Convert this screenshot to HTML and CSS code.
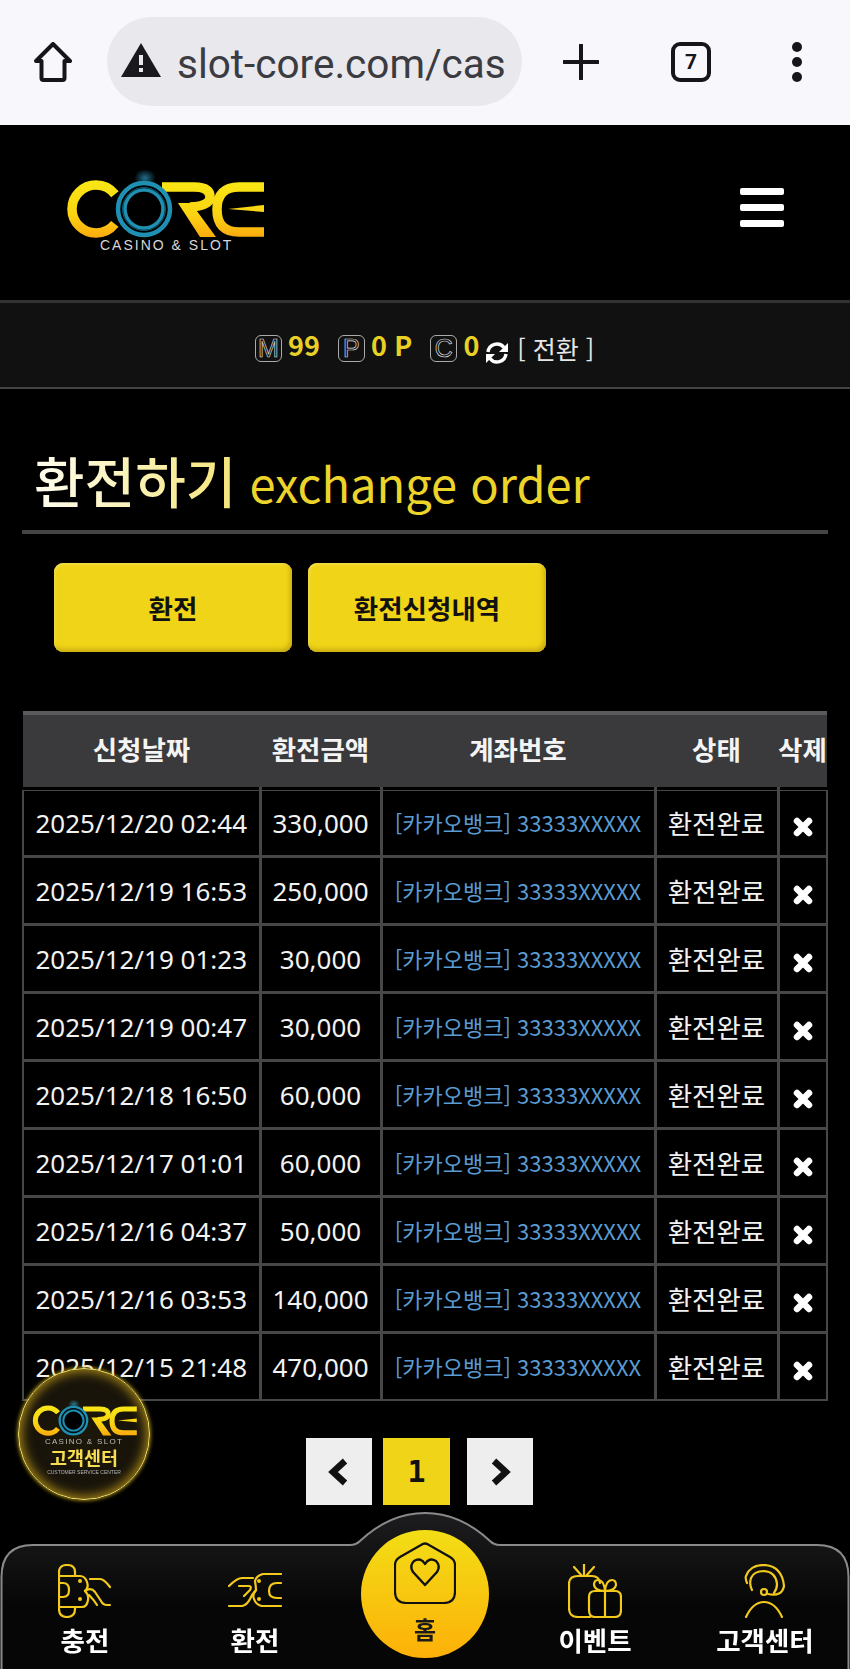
FILE: index.html
```html
<!DOCTYPE html>
<html lang="ko">
<head>
    <meta charset="UTF-8">
    <meta name="viewport" content="width=device-width, initial-scale=1.0">
    <title>환전하기</title>
    <link rel="stylesheet" href="styles.css">
</head>
<body>
    <svg class="defs" width="0" height="0" aria-hidden="true">
        <defs>
            <linearGradient id="logo-grad" gradientUnits="userSpaceOnUse" x1="0" y1="30" x2="0" y2="88">
                <stop offset="0" stop-color="#f8e715"/>
                <stop offset="0.6" stop-color="#fbd312"/>
                <stop offset="1" stop-color="#fca90e"/>
            </linearGradient>
            <radialGradient id="logo-glow">
                <stop offset="0" stop-color="#2f9cc4" stop-opacity="0.7"/>
                <stop offset="1" stop-color="#2f9cc4" stop-opacity="0"/>
            </radialGradient>
            <symbol id="core-logo" viewBox="20 20 210 70">
                <title>CORE</title>
                <ellipse cx="105" cy="28" rx="11" ry="9" fill="url(#logo-glow)"/>
                <circle cx="56" cy="59" r="24" fill="none" stroke="url(#logo-grad)" stroke-width="9.500" stroke-dasharray="118 33" stroke-dashoffset="-16"/>
                <path d="M122 37H154Q170 37 170 47Q170 56 150 57" fill="none" stroke="url(#logo-grad)" stroke-width="9.500"/>
                <path d="M138 53H151L176 87H160Z" fill="url(#logo-grad)"/>
                <path d="M224 37H199Q177 37 177 59.500Q177 82 199 82H224" fill="none" stroke="url(#logo-grad)" stroke-width="9.500"/>
                <path d="M188 59L224 55V62Z" fill="url(#logo-grad)"/>
                <circle cx="104" cy="59" r="27" fill="#000"/>
                <circle cx="104" cy="59" r="26" fill="none" stroke="#1f8fb2" stroke-width="4.500"/>
                <circle cx="104" cy="59" r="21.500" fill="none" stroke="#0b5f7c" stroke-width="1"/>
                <circle cx="104" cy="59" r="19" fill="none" stroke="#1f8fb2" stroke-width="3.500"/>
            </symbol>
        </defs>
    </svg>

    <div class="browser-bar">
        <svg class="ico-home" viewBox="0 0 40 40"><path d="M20 2L37 19H31.500V36Q31.500 38 29.500 38H10.500Q8.500 38 8.500 36V19H3Z" fill="none" stroke="#16161a" stroke-width="4" stroke-linejoin="round"/></svg>
        <div class="url-pill">
            <svg class="ico-warn" viewBox="0 0 40 36"><path d="M20 1L40 35H0Z" fill="#1a1a1e"/><rect x="18" y="13" width="4" height="10" fill="#e9e8ed"/><rect x="18" y="26" width="4" height="4" fill="#e9e8ed"/></svg>
            <span class="url-text">slot-core.com/cas</span>
        </div>
        <svg class="ico-plus" viewBox="0 0 36 36"><path d="M18 1V35M1 18H35" stroke="#16161a" stroke-width="4" stroke-linecap="round"/></svg>
        <div class="tab-count">7</div>
        <div class="dots"><i></i><i></i><i></i></div>
    </div>

    <header class="site-head">
        <svg class="logo"><use href="#core-logo"/></svg>
        <span class="logo-sub">CASINO &amp; SLOT</span>
        <div class="burger"><i></i><i></i><i></i></div>
    </header>

    <div class="points">
        <span class="pt-box">M</span><b class="pt-val">99</b>
        <span class="pt-box pt-gap">P</span><b class="pt-val">0 P</b>
        <span class="pt-box pt-gap">C</span><b class="pt-val">0</b>
        <svg class="ico-sync" viewBox="0 0 24 24"><path d="M3 11A9 9 0 0 1 19 6.500" fill="none" stroke="#fff" stroke-width="3.400"/><path d="M23 2V11H14Z" fill="#fff"/><path d="M21 13A9 9 0 0 1 5 17.500" fill="none" stroke="#fff" stroke-width="3.400"/><path d="M1 22V13H10Z" fill="#fff"/></svg>
        <span class="pt-swap">[ 전환 ]</span>
    </div>

    <main class="content">
        <h1 class="page-title"><span class="ko">환전하기</span> <span class="en">exchange order</span></h1>
        <div class="tabs">
            <a class="tab-btn">환전</a>
            <a class="tab-btn">환전신청내역</a>
        </div>
        <table class="list">
            <thead>
                <tr><th>신청날짜</th><th>환전금액</th><th>계좌번호</th><th>상태</th><th>삭제</th></tr>
            </thead>
            <tbody id="rows"></tbody>
        </table>
        <div class="pager">
            <a class="pg"><svg viewBox="0 0 22 28"><path d="M17 3L5 14L17 25" fill="none" stroke="#111" stroke-width="6.500"/></svg></a>
            <a class="pg pg-on">1</a>
            <a class="pg"><svg viewBox="0 0 22 28"><path d="M5 3L17 14L5 25" fill="none" stroke="#111" stroke-width="6.500"/></svg></a>
        </div>
    </main>

    <div class="cs-badge">
        <svg class="cs-logo"><use href="#core-logo"/></svg>
        <span class="cs-sub">CASINO &amp; SLOT</span>
        <span class="cs-ko">고객센터</span>
        <span class="cs-en">CUSTOMER SERVICE CENTER</span>
    </div>

    <nav class="bottom-nav">
        <svg class="nav-shape" viewBox="0 0 850 157" preserveAspectRatio="none">
            <defs>
                <linearGradient id="nav-bg" x1="0" y1="0" x2="0" y2="1">
                    <stop offset="0" stop-color="#1d1d1f"/>
                    <stop offset="0.6" stop-color="#060606"/>
                </linearGradient>
            </defs>
            <path d="M1.500 157V65Q1.500 33 33 33H350Q356 33 360 29Q390 1 425 1Q460 1 490 29Q494 33 500 33H817Q848.500 33 848.500 65V157" fill="url(#nav-bg)" stroke="#8a8a8a" stroke-width="2"/>
        </svg>
        <a class="nav-item">
            <svg class="nav-ico" viewBox="0 0 54 54"><g fill="none" stroke="#f3c91c" stroke-width="2.200" stroke-linecap="round" stroke-linejoin="round"><path d="M1 12V8Q1 1 9 1Q17 1 17 8V12M1 43V45Q1 53 9 53Q17 53 17 45V43"/><path d="M1 12V43M1 12H22Q27 12 29 18Q31 24 27 27Q31 31 30 36Q29 43 24 43H1"/><path d="M1 19H5Q11 19 11 26Q11 33 5 33H1"/><path d="M32 15H42Q46 15 52 23M27 27Q33 23 37 28L43 37Q45 41 49 41H52M31 31Q36 36 39 41"/></g><g fill="#f3c91c"><circle cx="22" cy="17" r="2"/><circle cx="22" cy="35" r="2"/></g></svg>
            <span>충전</span>
        </a>
        <a class="nav-item">
            <svg class="nav-ico nav-ico-wide" viewBox="0 0 54 34"><g fill="none" stroke="#f3c91c" stroke-width="2.200" stroke-linecap="round" stroke-linejoin="round"><path d="M53 1H35Q28 3 27 8Q28 14 28 17Q24 22 26 26Q28 32 34 33H53"/><path d="M53 10H49Q41 10 41 18Q41 25 49 25H53"/><path d="M1 13Q9 5 14 5H25M11 13H21Q24 13 22 17L16 23M1 33H14Q19 32 22 26Q24 21 28 17"/></g><g fill="#f3c91c"><circle cx="31" cy="8" r="2"/><circle cx="31" cy="26" r="2"/></g></svg>
            <span>환전</span>
        </a>
        <a class="nav-item nav-home">
            <svg class="home-ico" viewBox="0 0 62 62"><path d="M27 3Q31 0 35 3L56 15Q61 18 61 23V50Q61 61 50 61H12Q1 61 1 50V23Q1 18 6 15Z" fill="none" stroke="#111" stroke-width="2.200" stroke-linejoin="round"/><path d="M31 43L19 30Q15 24 20 19Q27 15 31 22Q35 15 42 19Q47 24 43 30Z" fill="none" stroke="#111" stroke-width="2.400" stroke-linejoin="round"/></svg>
            <span>홈</span>
        </a>
        <a class="nav-item">
            <svg class="nav-ico" viewBox="0 0 54 54"><g fill="none" stroke="#f3c91c" stroke-width="2.200" stroke-linecap="round" stroke-linejoin="round"><path d="M22 53H10Q1 53 1 44V20Q1 12 10 12H24Q31 12 32 19"/><path d="M6 3L14 12M16 0V11M26 3L18 12"/><path d="M21 33Q21 27 27 27H47Q53 27 53 33V46Q53 53 47 53H27Q21 53 21 46ZM37 27V53"/><path d="M37 27Q27 27 26 21Q26 16 30 16Q36 16 37 27Q38 16 44 16Q48 16 48 21Q47 27 37 27Z"/></g></svg>
            <span>이벤트</span>
        </a>
        <a class="nav-item">
            <svg class="nav-ico nav-ico-cs" viewBox="0 0 42 54"><g fill="none" stroke="#f3c91c" stroke-width="2.200" stroke-linecap="round" stroke-linejoin="round"><path d="M3 19Q1 14 2 12Q6 1 20 1Q38 2 40 22Q38 33 24 30"/><path d="M8 26Q5 20 7 14Q10 7 20 7Q32 8 33 20Q33 25 30 29"/><circle cx="20" cy="28" r="3"/><path d="M2 53Q9 38 20 38Q31 38 38 53"/></g></svg>
            <span>고객센터</span>
        </a>
    </nav>

    <script>
        const rows = [
            ['2025/12/20 02:44', '330,000'],
            ['2025/12/19 16:53', '250,000'],
            ['2025/12/19 01:23', '30,000'],
            ['2025/12/19 00:47', '30,000'],
            ['2025/12/18 16:50', '60,000'],
            ['2025/12/17 01:01', '60,000'],
            ['2025/12/16 04:37', '50,000'],
            ['2025/12/16 03:53', '140,000'],
            ['2025/12/15 21:48', '470,000']
        ];
        const tbody = document.getElementById('rows');
        rows.forEach(r => {
            const tr = document.createElement('tr');
            tr.innerHTML = `
                <td class="num">${r[0]}</td>
                <td class="num">${r[1]}</td>
                <td class="acct">[카카오뱅크] 33333XXXXX</td>
                <td>환전완료</td>
                <td class="del"><svg viewBox="0 0 20 20"><path d="M4 4L16 16M16 4L4 16" stroke="#fff" stroke-width="6.500" stroke-linecap="round"/></svg></td>
            `;
            tbody.appendChild(tr);
        });
    </script>
</body>
</html>
```

FILE: styles.css
```css
* {
    box-sizing: border-box;
}
html, body {
    margin: 0;
    padding: 0;
    background: #000;
    height: 1669px;
    overflow: hidden;
}
body {
    font-family: "Noto Sans CJK KR", "Noto Sans", sans-serif;
    color: #fff;
}
.defs {
    display: block;
    height: 0;
}

/* browser bar */
.browser-bar {
    height: 125px;
    background: #f8f7fc;
    display: flex;
    align-items: center;
    padding: 0 0 2px 33px;
}
.ico-home {
    width: 40px;
    height: 40px;
}
.url-pill {
    width: 415px;
    height: 89px;
    margin-left: 34px;
    padding-left: 14px;
    background: #e9e8ed;
    border-radius: 45px;
    display: flex;
    align-items: center;
    overflow: hidden;
}
.ico-warn {
    width: 40px;
    height: 36px;
    flex: none;
    margin-top: -3px;
}
.url-text {
    margin-left: 16px;
    font-family: Roboto, sans-serif;
    font-size: 40.500px;
    color: #3b3b42;
    white-space: nowrap;
    padding-top: 4px;
}
.ico-plus {
    width: 36px;
    height: 36px;
    margin-left: 41px;
}
.tab-count {
    width: 40px;
    height: 40px;
    margin-left: 72px;
    border: 4px solid #16161a;
    border-radius: 9px;
    font-family: Roboto, sans-serif;
    font-weight: 700;
    font-size: 21px;
    line-height: 32px;
    color: #16161a;
    text-align: center;
}
.dots {
    margin-left: 81px;
    display: flex;
    flex-direction: column;
    gap: 5px;
}
.dots i {
    display: block;
    width: 10px;
    height: 10px;
    border-radius: 50%;
    background: #16161a;
}

/* header */
.site-head {
    height: 175px;
    background: #000;
    position: relative;
    padding: 45px 66px 0 67px;
    display: flex;
    justify-content: space-between;
}
.logo {
    width: 210px;
    height: 70px;
    margin-left: -7px;
}
.logo-sub {
    position: absolute;
    left: 100px;
    top: 112px;
    font-family: "Liberation Sans", sans-serif;
    font-size: 14px;
    letter-spacing: 2px;
    color: #d8d8d8;
}
.burger {
    display: flex;
    flex-direction: column;
    gap: 9px;
    margin-top: 18px;
}
.burger i {
    display: block;
    width: 44px;
    height: 7px;
    border-radius: 2px;
    background: #fff;
}

/* points */
.points {
    height: 89px;
    background: #111112;
    border-top: 3px solid #333;
    border-bottom: 2px solid #444;
    display: flex;
    align-items: center;
    padding: 6px 0 0 255px;
}
.pt-box {
    width: 27px;
    height: 27px;
    border: 1.500px solid #aaa;
    border-radius: 6px;
    font-family: "Liberation Sans", sans-serif;
    font-size: 25px;
    line-height: 24px;
    color: transparent;
    -webkit-text-stroke: 0.700px #ddd;
    text-align: center;
}
.pt-gap {
    margin-left: 18px;
}
.pt-val {
    margin-left: 6px;
    font-size: 27px;
    line-height: 27px;
    color: #e8d124;
    margin-top: -8px;
}
.ico-sync {
    width: 24px;
    height: 24px;
    margin-left: 6px;
    margin-top: 9px;
}
.pt-swap {
    margin-left: 8px;
    font-size: 25px;
    color: #e6e6e6;
    line-height: 27px;
    white-space: nowrap;
}

/* content */
.content {
    padding: 0 22px;
}
.page-title {
    margin: 0;
    height: 145px;
    padding: 54px 0 0 12px;
    border-bottom: 4px solid #444;
    font-weight: 400;
    line-height: 72px;
    white-space: nowrap;
}
.page-title .ko {
    font-size: 55px;
    font-weight: 500;
    background: linear-gradient(to right, #fffdf0, #f6e578);
    -webkit-background-clip: text;
    background-clip: text;
    color: transparent;
}
.page-title .en {
    margin-left: 4px;
    font-size: 47px;
    color: #ecd42a;
}
.tabs {
    display: flex;
    gap: 16px;
    padding: 29px 32px 0;
}
.tab-btn {
    width: 238px;
    height: 89px;
    background: #efd417;
    border-radius: 9px;
    box-shadow: inset -2px -3px 4px #c9ac10, inset 1px 1px 3px #f7e560;
    color: #111;
    font-size: 26.500px;
    font-weight: 700;
    display: flex;
    align-items: center;
    justify-content: center;
}

/* table */
.list {
    width: 806px;
    margin-top: 59px;
    table-layout: fixed;
    border-collapse: collapse;
}
.list th {
    height: 75px;
    padding: 0 0 4px;
    background: #3a3a3c;
    border-top: 4px solid #5a5a5c;
    font-size: 26.500px;
    font-weight: 700;
    color: #f4f4f4;
    white-space: nowrap;
}
.list th:nth-child(1), .list td:nth-child(1) { width: 237px; }
.list th:nth-child(2), .list td:nth-child(2) { width: 121px; }
.list th:nth-child(3), .list td:nth-child(3) { width: 274px; }
.list th:nth-child(4), .list td:nth-child(4) { width: 123px; }
.list td {
    height: 68px;
    padding: 0;
    border: 3px solid #474747;
    text-align: center;
    font-size: 26.500px;
    color: #f2f2f2;
    white-space: nowrap;
}
.list td:first-child {
    border-left-width: 2px;
}
.list td:last-child {
    border-right-width: 2px;
}
.list tbody tr:first-child td {
    border-top: 3px solid #000;
    box-shadow: inset 0 1px 0 #474747;
}
.list tbody tr:last-child td {
    border-bottom-width: 2px;
}
.list .num {
    padding-top: 2px;
    font-family: "Noto Sans", sans-serif;
    font-size: 26px;
}
.list .acct {
    font-size: 22px;
    color: #5a9bd2;
}
.list .del svg {
    width: 20px;
    height: 20px;
    vertical-align: -3px;
}

/* pager */
.pager {
    display: flex;
    padding: 37px 0 0 284px;
    gap: 11px;
}
.pg {
    width: 66px;
    height: 67px;
    background: #eee;
    display: flex;
    align-items: center;
    justify-content: center;
}
.pg svg {
    width: 22px;
    height: 28px;
}
.pg-on {
    width: 67px;
    background: #f0d418;
    color: #111;
    font-family: "DejaVu Sans Mono", monospace;
    font-weight: 700;
    font-size: 30px;
}
.pg-on + .pg {
    margin-left: 6px;
}

/* floating support badge */
.cs-badge {
    position: fixed;
    left: 18px;
    top: 1368px;
    width: 132px;
    height: 132px;
    border-radius: 50%;
    background: radial-gradient(circle, #1d1808 0%, #17130a 60%, #3b2e07 85%, #a98a10 97%);
    border: 1.500px solid #f6e46e;
    box-shadow: 0 0 4px #e7c21c, inset 0 0 14px #d0a81e;
    display: flex;
    flex-direction: column;
    align-items: center;
    padding-top: 31px;
    overflow: hidden;
}
.cs-logo {
    width: 111px;
    height: 37px;
    flex: none;
}
.cs-sub {
    font-family: "Liberation Sans", sans-serif;
    font-size: 8px;
    letter-spacing: 1.300px;
    line-height: 9px;
    color: #bdbdbd;
}
.cs-ko {
    font-size: 18.500px;
    font-weight: 700;
    line-height: 22px;
    color: #f5dc50;
}
.cs-en {
    font-family: "Liberation Sans", sans-serif;
    font-size: 5px;
    line-height: 8px;
    white-space: nowrap;
    color: #b5b5b5;
}

/* bottom nav */
.bottom-nav {
    position: fixed;
    left: 0;
    right: 0;
    bottom: 0;
    height: 157px;
    display: grid;
    grid-template-columns: repeat(5, 170px);
}
.nav-shape {
    position: absolute;
    left: 0;
    top: 0;
    width: 850px;
    height: 157px;
}
.nav-item {
    position: relative;
    display: flex;
    flex-direction: column;
    align-items: center;
    padding-top: 52px;
    color: #fff;
    font-size: 26.500px;
    font-weight: 700;
    line-height: 30px;
}
.nav-ico {
    width: 54px;
    height: 54px;
    margin-bottom: 7px;
}
.nav-ico-wide {
    height: 34px;
    margin: 9px 0 18px;
}
.nav-ico-cs {
    width: 42px;
}
.nav-home {
    width: 128px;
    height: 128px;
    margin: 18px 0 0 21px;
    padding-top: 12px;
    border-radius: 50%;
    background: linear-gradient(#f2de16, #fdb008);
    color: #1a1a1a;
    font-size: 24px;
}
.home-ico {
    width: 62px;
    height: 62px;
    margin-bottom: 10px;
}
```
